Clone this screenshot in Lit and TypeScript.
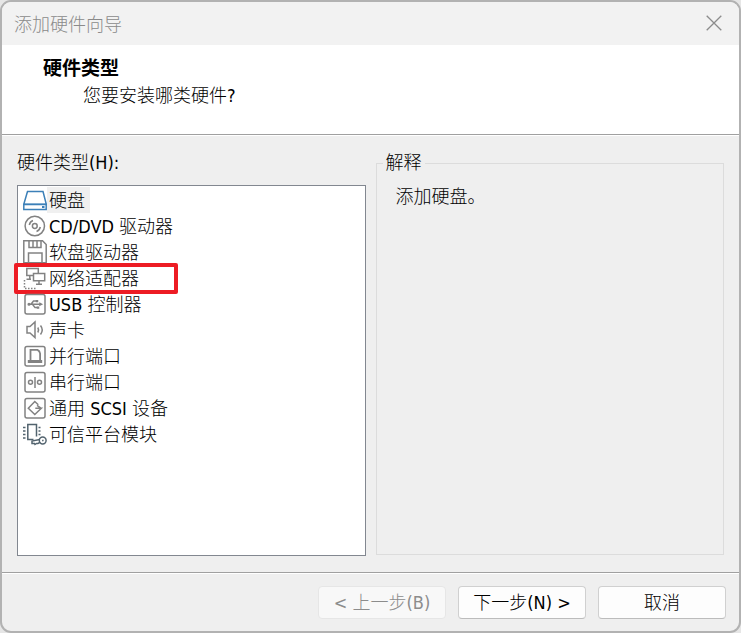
import { LitElement, html, css, svg, nothing } from "lit";
import { customElement, state } from "lit/decorators.js";
import { classMap } from "lit/directives/class-map.js";

const frame = svg`<rect x="2" y="2.500" width="20" height="19.500" rx="2" />`;

const icons = {
  disk: svg`<path d="M4.500 3.500h15.500l3.300 12.800H.8z" /><path d="M.8 16.500h22.400v5H.8z" /><path d="M19 19h2.500" stroke-width="2" />`,
  disc: svg`<circle cx="11.800" cy="12" r="9.700" /><circle cx="11.800" cy="12" r="2.400" /><path d="M6.300 11Q7 7.500 10 6.500M17.300 13Q16.500 16.500 13.500 17.500" />`,
  floppy: svg`<path d="M.8.8h18.700l3.700 3.700v18.200H.8z" /><path d="M6 1v6.500h12V1M10 1v6.500M14 1v6.500M5.500 22.500v-9.500H19v9.500" />`,
  network: svg`<path d="M10 9.500H3.800V2.500h11.500v4.500" /><path d="M10.500 7.500h11.200v7.200H10.500zM16 15v3M13 18.300h6M3.500 13.300h4.500M6.800 9.500v3.500" /><path d="M1.500 14v8.500h12" stroke-dasharray="1.500 1.500" />`,
  usb: svg`${frame}<path d="M5.500 12.300h11.500M8 12.300l2.500-3.300h3M9.500 12.300l2.500 3.300h2.500" /><circle cx="6" cy="12.300" r=".8" /><path d="M13.500 8.800h1v.8h-1zM14.500 15.300h1v.8h-1zM17 11.500l1.500.8-1.500.8z" />`,
  sound: svg`<path d="M4 8.500h3l5-4.500v15.500l-5-4.500H4z" /><path d="M14.800 9.500q1.500 2.500 0 5M17.500 7.500q3.500 4.500 0 9" />`,
  parallel: svg`${frame}<path d="M7.500 16V5.800h7q2.300 1 2.600 3.700V16" stroke-width="1.800" /><path d="M4.800 17.500h14.400" stroke-width="3" />`,
  serial: svg`${frame}<circle cx="7.500" cy="12.300" r="2" /><circle cx="16.500" cy="12.300" r="2" /><path d="M12 7v11" />`,
  scsi: svg`${frame}<path d="M15.300 8.800l-3.500-3.300-6.500 6.800 6.500 6.200 6.500-6.200h-6M14 9.300l4.300 3" />`,
  tpm: svg`<path d="M10.500 17.500H4.800V2.500h8.700v12" /><path d="M0 5.500h2.500M0 9h2.500M0 12.500h2.500M0 16h2.500M15.500 5.500h2M15.500 9h2M15.500 12.500h2" /><circle cx="19.700" cy="18.500" r="3.400" /><path d="M16.700 17.500L9 19v2.500h2.500l.5 1 1.500-1h1.500l2.300-1.300M19.200 18.800l1.300-.5" />`,
};

interface Hardware {
  icon: keyof typeof icons;
  name: string;
  marked?: boolean;
}

const hardware: Hardware[] = [
  { icon: "disk", name: "硬盘" },
  { icon: "disc", name: "CD/DVD 驱动器" },
  { icon: "floppy", name: "软盘驱动器" },
  { icon: "network", name: "网络适配器", marked: true },
  { icon: "usb", name: "USB 控制器" },
  { icon: "sound", name: "声卡" },
  { icon: "parallel", name: "并行端口" },
  { icon: "serial", name: "串行端口" },
  { icon: "scsi", name: "通用 SCSI 设备" },
  { icon: "tpm", name: "可信平台模块" },
];

@customElement("app-root")
export class AppRoot extends LitElement {
  @state() private selected = 0;

  static styles = css`
    :host {
      display: flex;
      min-height: 100vh;
      background: #e6e6e6;
      color: #000;
      font: 300 18px/24px "DejaVu Sans Condensed", "DejaVu Sans", "Noto Sans CJK SC", sans-serif;
      font-stretch: condensed;
    }
    * {
      box-sizing: border-box;
    }
    button {
      font: inherit;
      color: inherit;
    }
    .dialog {
      flex: 1;
      display: flex;
      flex-direction: column;
      border: 2px solid #b2b2b2;
      border-radius: 11px;
      background: #efefef;
      overflow: hidden;
    }
    .titlebar {
      display: flex;
      align-items: center;
      justify-content: space-between;
      height: 43px;
      padding: 0 17px 2px 12px;
      background: #f2f2f2;
      color: #8a8a8a;
      font-family: "Noto Sans CJK SC", sans-serif;
    }
    .title,
    .heading {
      margin: 0;
      font-size: inherit;
      font-weight: inherit;
    }
    .close {
      display: flex;
      padding: 0;
      border: 0;
      background: none;
    }
    .banner {
      height: 90px;
      padding: 11px 41px;
      background: #fff;
      border-bottom: 1px solid #a0a0a0;
      box-shadow: 0 1px #fff;
    }
    .heading {
      font-size: 19px;
      font-weight: 700;
    }
    .question {
      margin: 4px 0 0;
      padding-left: 40px;
    }
    .main {
      flex: 1;
      display: grid;
      grid-template-columns: 1fr 1fr;
      gap: 10px;
      padding: 16px 15px;
    }
    .types {
      display: flex;
      flex-direction: column;
      gap: 10px;
    }
    .list {
      flex: 1;
      margin: 0;
      padding: 1px 5px;
      list-style: none;
      background: #fff;
      border: 1px solid #828790;
    }
    .row {
      position: relative;
    }
    .item {
      display: flex;
      align-items: center;
      height: 26px;
      padding: 0;
      border: 0;
      background: none;
      white-space: nowrap;
    }
    .name {
      height: 26px;
      line-height: 28px;
      padding: 0 5px 0 2px;
    }
    .selected .name {
      background: #f0f0f0;
    }
    .icon {
      width: 24px;
      height: 24px;
      fill: none;
      stroke: #828282;
      stroke-width: 1.5;
    }
    .icon.disk {
      stroke: #3c80b8;
    }
    .icon.tpm {
      stroke: #52636e;
    }
    .mark {
      position: absolute;
      top: -2px;
      left: -9px;
      width: 164px;
      height: 31px;
      border: 4px solid #ed1c24;
      border-radius: 2px;
      pointer-events: none;
    }
    .details {
      min-width: 0;
      margin: 0 0 1px;
      padding: 10px 19px;
      border: 1px solid #dcdcdc;
    }
    .legend {
      margin-left: -13px;
      padding: 0 3px;
    }
    .note {
      margin: 0;
    }
    .footer {
      display: flex;
      justify-content: flex-end;
      gap: 12px;
      padding: 13px 13px 12px;
      border-top: 1px solid #a0a0a0;
      box-shadow: inset 0 1px #fff;
    }
    .action {
      width: 128px;
      height: 33px;
      padding: 0;
      border: 1px solid #d0d0d0;
      border-bottom-color: #bcbcbc;
      border-radius: 4px;
      background: #fdfdfd;
      white-space: nowrap;
    }
    .action:disabled {
      border-color: #e6e6e6;
      background: #f8f8f8;
      color: #8c8c8c;
    }
  `;

  private renderItem(item: Hardware, index: number) {
    const isSelected = index === this.selected;
    return html`
      <li class="row">
        <button
          type="button"
          class=${classMap({ item: true, selected: isSelected })}
          aria-pressed=${isSelected}
          @click=${() => (this.selected = index)}
        >
          <svg class="icon ${item.icon}" viewBox="0 0 24 24" aria-hidden="true">${icons[item.icon]}</svg>
          <span class="name">${item.name}</span>
        </button>
        ${item.marked ? html`<span class="mark"></span>` : nothing}
      </li>
    `;
  }

  render() {
    return html`
      <div class="dialog" role="dialog" aria-labelledby="title">
        <header class="titlebar">
          <h1 class="title" id="title">添加硬件向导</h1>
          <button type="button" class="close" aria-label="关闭">
            <svg width="16" height="16" viewBox="0 0 16 16" fill="none" stroke="#8c8c8c" stroke-width="1.3">
              <path d="M.7.7l14.600 14.600M15.300.7L.7 15.300" />
            </svg>
          </button>
        </header>
        <section class="banner">
          <h2 class="heading">硬件类型</h2>
          <p class="question">您要安装哪类硬件?</p>
        </section>
        <main class="main">
          <section class="types">
            <span id="types">硬件类型(H):</span>
            <ul class="list" aria-labelledby="types">
              ${hardware.map((item, index) => this.renderItem(item, index))}
            </ul>
          </section>
          <fieldset class="details">
            <legend class="legend">解释</legend>
            <p class="note">添加${hardware[this.selected].name}。</p>
          </fieldset>
        </main>
        <footer class="footer">
          <button type="button" class="action" disabled>&lt; 上一步(B)</button>
          <button type="button" class="action">下一步(N) &gt;</button>
          <button type="button" class="action">取消</button>
        </footer>
      </div>
    `;
  }
}
